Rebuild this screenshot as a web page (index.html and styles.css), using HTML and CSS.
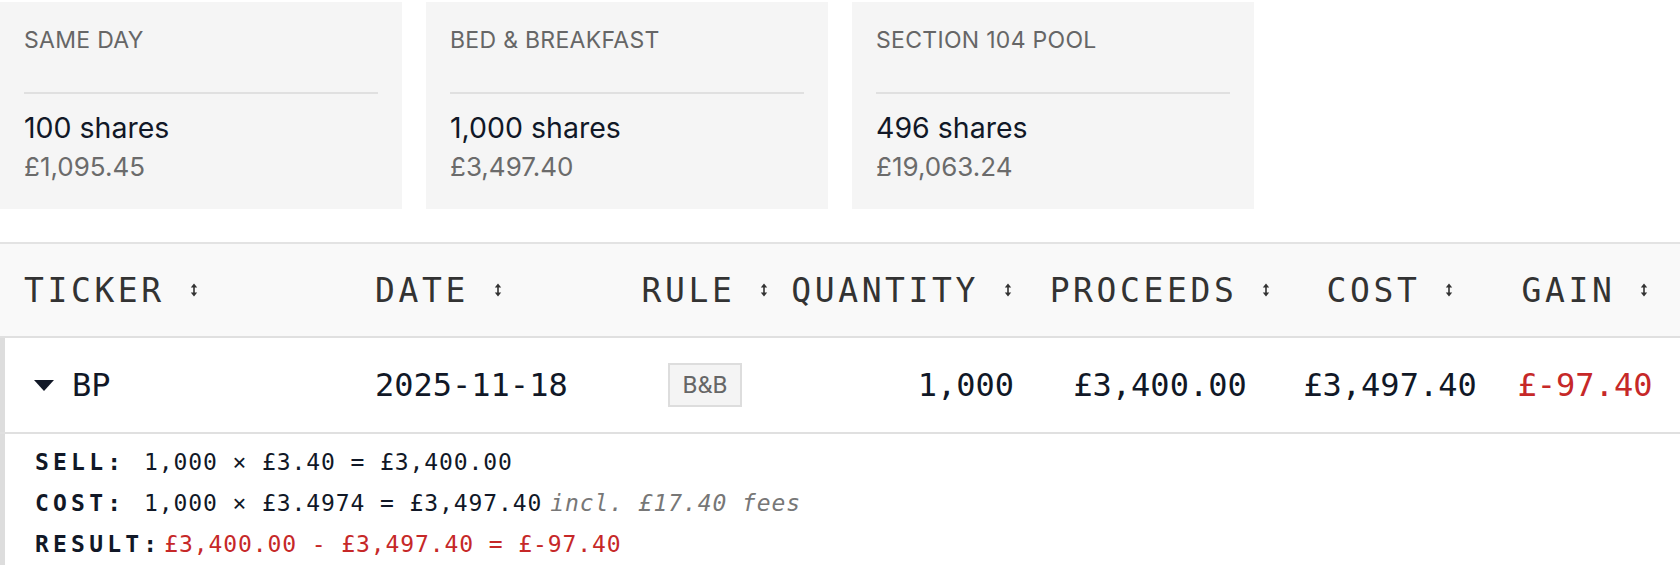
FILE: index.html
```html
<!DOCTYPE html>
<html lang="en">
<head>
<meta charset="utf-8">
<title>Disposals</title>
<link rel="stylesheet" href="styles.css">
</head>
<body>
<div class="page">
  <div class="cards">
    <div class="card">
      <div class="card-label">SAME DAY</div>
      <div class="card-rule"></div>
      <div class="card-qty">100 shares</div>
      <div class="card-cost">£1,095.45</div>
    </div>
    <div class="card">
      <div class="card-label">BED &amp; BREAKFAST</div>
      <div class="card-rule"></div>
      <div class="card-qty">1,000 shares</div>
      <div class="card-cost">£3,497.40</div>
    </div>
    <div class="card">
      <div class="card-label">SECTION 104 POOL</div>
      <div class="card-rule"></div>
      <div class="card-qty">496 shares</div>
      <div class="card-cost">£19,063.24</div>
    </div>
  </div>

  <div class="table">
    <div class="grid thead">
      <div class="th th-left th-ticker"><span class="th-label">TICKER</span><svg class="sort" viewBox="0 0 8 14"><path d="M4 3v8" stroke="currentColor" stroke-width="1.6"/><path d="M0.8 4.4L4 0.6 7.2 4.4z M0.8 9.6L4 13.4 7.2 9.6z" fill="currentColor"/></svg></div>
      <div class="th th-left th-date"><span class="th-label">DATE</span><svg class="sort" viewBox="0 0 8 14"><path d="M4 3v8" stroke="currentColor" stroke-width="1.6"/><path d="M0.8 4.4L4 0.6 7.2 4.4z M0.8 9.6L4 13.4 7.2 9.6z" fill="currentColor"/></svg></div>
      <div class="th th-center"><span class="th-label">RULE</span><svg class="sort" viewBox="0 0 8 14"><path d="M4 3v8" stroke="currentColor" stroke-width="1.6"/><path d="M0.8 4.4L4 0.6 7.2 4.4z M0.8 9.6L4 13.4 7.2 9.6z" fill="currentColor"/></svg></div>
      <div class="th th-right th-qty"><span class="th-label">QUANTITY</span><svg class="sort" viewBox="0 0 8 14"><path d="M4 3v8" stroke="currentColor" stroke-width="1.6"/><path d="M0.8 4.4L4 0.6 7.2 4.4z M0.8 9.6L4 13.4 7.2 9.6z" fill="currentColor"/></svg></div>
      <div class="th th-center"><span class="th-label">PROCEEDS</span><svg class="sort" viewBox="0 0 8 14"><path d="M4 3v8" stroke="currentColor" stroke-width="1.6"/><path d="M0.8 4.4L4 0.6 7.2 4.4z M0.8 9.6L4 13.4 7.2 9.6z" fill="currentColor"/></svg></div>
      <div class="th th-center"><span class="th-label">COST</span><svg class="sort" viewBox="0 0 8 14"><path d="M4 3v8" stroke="currentColor" stroke-width="1.6"/><path d="M0.8 4.4L4 0.6 7.2 4.4z M0.8 9.6L4 13.4 7.2 9.6z" fill="currentColor"/></svg></div>
      <div class="th th-center"><span class="th-label">GAIN</span><svg class="sort" viewBox="0 0 8 14"><path d="M4 3v8" stroke="currentColor" stroke-width="1.6"/><path d="M0.8 4.4L4 0.6 7.2 4.4z M0.8 9.6L4 13.4 7.2 9.6z" fill="currentColor"/></svg></div>
    </div>

    <div class="group">
      <div class="grid row">
        <div class="td td-ticker"><svg class="caret" viewBox="0 0 20 11"><path d="M0 0h20L10 11z" fill="currentColor"/></svg><span>BP</span></div>
        <div class="td td-date">2025-11-18</div>
        <div class="td td-center"><span class="badge">B&amp;B</span></div>
        <div class="td td-qty">1,000</div>
        <div class="td td-center">£3,400.00</div>
        <div class="td td-center">£3,497.40</div>
        <div class="td td-center loss">£-97.40</div>
      </div>
      <div class="detail">
        <div class="line"><span class="dl">SELL:</span><span>1,000 × £3.40 = £3,400.00</span></div>
        <div class="line"><span class="dl">COST:</span><span>1,000 × £3.4974 = £3,497.40</span><span class="fees">incl. £17.40 fees</span></div>
        <div class="line"><span class="dl">RESULT:</span><span class="loss">£3,400.00 - £3,497.40 = £-97.40</span></div>
      </div>
    </div>
  </div>
</div>
</body>
</html>
```

FILE: styles.css
```css
* { box-sizing: border-box; }
html, body { margin: 0; padding: 0; background: #ffffff; }
body { font-family: "Inter", "Noto Sans", sans-serif; color: #111827; }

.page { padding-top: 2px; }

.cards { display: flex; gap: 24px; }
.card {
  width: 402px;
  height: 207px;
  background: #f5f5f5;
  padding: 24px 24px 0;
}
.card-label {
  font-size: 23px;
  line-height: 28px;
  color: #666666;
  letter-spacing: 0.3px;
}
.card-rule {
  height: 2px;
  background: #e0e0e0;
  margin-top: 38px;
}
.card-qty {
  margin-top: 17px;
  font-size: 28.5px;
  line-height: 34px;
  color: #111827;
}
.card-cost {
  margin-top: 6px;
  font-size: 26px;
  line-height: 32px;
  color: #6b6b6b;
}

.table { margin-top: 33px; font-family: "DejaVu Sans Mono", monospace; }
.grid {
  display: grid;
  grid-template-columns: 350px 270px 170px 240px 260px 200px 190px;
}
.thead {
  height: 96px;
  background: #f9f9f9;
  border-top: 2px solid #e3e3e3;
  border-bottom: 2px solid #e0e0e0;
}
.th {
  display: flex;
  align-items: center;
  color: #333333;
  font-size: 33px;
}
.th-label { letter-spacing: 3.6px; }
.th-left { justify-content: flex-start; }
.th-center { justify-content: center; }
.th-right { justify-content: flex-end; }
.th-ticker { padding-left: 24px; }
.th-date { padding-left: 25px; }
.th-qty { padding-right: 18px; }
.sort { width: 8px; height: 14px; margin-left: 25px; color: #333333; }

.group { box-shadow: inset 5px 0 0 #dddddd; }
.row {
  height: 96px;
  border-bottom: 2px solid #e0e0e0;
}
.td {
  display: flex;
  align-items: center;
  font-size: 32px;
  color: #111827;
}
.td-ticker { padding-left: 34px; }
.caret { width: 20px; height: 11px; margin-right: 18px; color: #111827; }
.td-date { padding-left: 25px; }
.td-center { justify-content: center; }
.td-qty { justify-content: flex-end; padding-right: 16px; }
.loss { color: #c62828; }

.badge {
  display: inline-flex;
  align-items: center;
  justify-content: center;
  width: 74px;
  height: 44px;
  background: #f4f4f4;
  border: 2px solid #dddddd;
  font-family: "Roboto", sans-serif;
  font-size: 24px;
  color: #666666;
}

.detail {
  padding: 8px 0 0 35px;
  font-size: 23px;
  line-height: 41px;
  letter-spacing: 0.9px;
  color: #111827;
}
.line { white-space: nowrap; }
.dl {
  display: inline-block;
  min-width: 106px;
  margin-right: 3px;
  font-weight: bold;
  letter-spacing: 4.2px;
}
.fees {
  margin-left: 8px;
  font-style: italic;
  color: #777777;
}
```
